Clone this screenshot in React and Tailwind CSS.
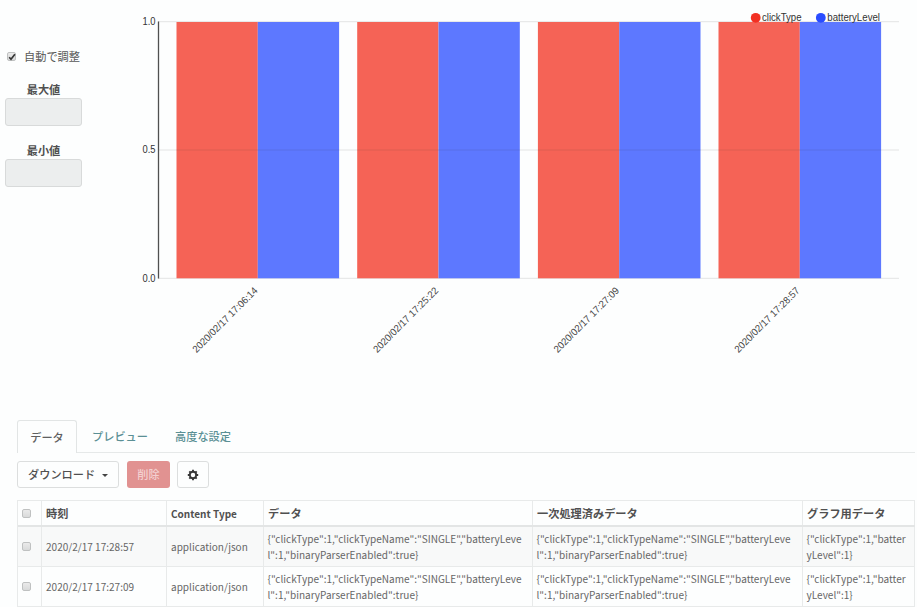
const cjk = "font-['Noto_Sans_CJK_JP',sans-serif]";

const groups = [
  { x: 176.5, label: "2020/02/17 17:06:14" },
  { x: 357.2, label: "2020/02/17 17:25:22" },
  { x: 537.9, label: "2020/02/17 17:27:09" },
  { x: 718.5, label: "2020/02/17 17:28:57" },
];

const ticks = [
  { y: 21.7, label: "1.0" },
  { y: 150, label: "0.5" },
  { y: 278.3, label: "0.0" },
];

const rows = [
  { time: "2020/2/17 17:28:57", shade: "bg-[#f8f9f9]" },
  { time: "2020/2/17 17:27:09", shade: "bg-[#fdfefe]" },
];

const payload = [
  '{"clickType":1,"clickTypeName":"SINGLE","batteryLeve',
  'l":1,"binaryParserEnabled":true}',
];
const graphData = ['{"clickType":1,"batter', 'yLevel":1}'];

function Checkbox({ checked = false }) {
  return (
    <span className="flex h-[9px] w-[9px] shrink-0 items-center justify-center rounded-[2px] border border-[#bfc1c1] bg-gradient-to-b from-[#eaeaea] to-[#d9dada]">
      {checked && (
        <svg viewBox="0 0 8 8" className="h-[8px] w-[8px] shrink-0">
          <path d="M1.2 4.2 L3 6.2 L6.9 1.3" fill="none" stroke="#333" strokeWidth="1.7" />
        </svg>
      )}
    </span>
  );
}

function Limit({ label }) {
  return (
    <div className="flex w-[77px] flex-col items-center">
      <span className="h-[17px] text-[11.2px] leading-[17px] font-bold text-[#505050]">{label}</span>
      <div className="h-7 w-full rounded-[3px] border border-[#d8dada] bg-[#eceeee]" />
    </div>
  );
}

function Chart() {
  return (
    <svg width="787" height="420" viewBox="130 0 787 420" fontFamily="'Liberation Sans', Arial, sans-serif" fontSize="10">
      {ticks.map((t) => (
        <g key={t.label}>
          <line x1="158" x2="899" y1={t.y} y2={t.y} stroke="#e3e4e4" strokeWidth="1" />
          <text x="142.5" y={t.y + 3.4} textLength="13" lengthAdjust="spacingAndGlyphs" fill="#333">{t.label}</text>
        </g>
      ))}
      <line x1="158.5" x2="158.5" y1="21.5" y2="278.5" stroke="#505050" strokeWidth="1.3" />
      {groups.map((g) => (
        <g key={g.label}>
          <rect x={g.x} y="22" width="81.3" height="256.3" fill="#f56356" />
          <rect x={g.x + 81.3} y="22" width="81.3" height="256.3" fill="#5d78ff" />
          <line x1={g.x} x2={g.x + 162.6} y1="150" y2="150" stroke="#333333" strokeOpacity="0.12" />
          <text
            transform={`translate(${g.x + 81.8} 291.3) rotate(-45)`}
            textAnchor="end"
            textLength="87.5"
            lengthAdjust="spacingAndGlyphs"
            fill="#444"
          >
            {g.label}
          </text>
        </g>
      ))}
      <circle cx="755.7" cy="17.8" r="4.9" fill="#f23023" />
      <text x="762" y="21.2" textLength="39.5" lengthAdjust="spacingAndGlyphs" fill="#333">clickType</text>
      <circle cx="820.8" cy="17.8" r="4.9" fill="#2a4cff" />
      <text x="827.3" y="21.2" textLength="52.7" lengthAdjust="spacingAndGlyphs" fill="#333">batteryLevel</text>
    </svg>
  );
}

function Lines({ lines }) {
  return (
    <div className="border-r border-[#e8eaea] pt-[4px] pl-[3.5px] leading-4 whitespace-nowrap">
      {lines.map((l) => (
        <div key={l}>{l}</div>
      ))}
    </div>
  );
}

const columns = "grid grid-cols-[24px_125px_97px_269px_270px_112px]";
const cell = "flex items-center border-r border-[#e8eaea] pl-1";

export default function App() {
  return (
    <div className={`h-[607px] w-[917px] overflow-hidden bg-[#fdfefe] text-[#666] ${cjk}`}>
      <div className="flex h-[420px]">
        <div className="flex w-[130px] shrink-0 flex-col pt-[48px] pl-[5px]">
          <div className="flex h-[17px] items-center gap-2 pl-[2px] text-[11.2px] text-[#585858]">
            <Checkbox checked />
            <span>自動で調整</span>
          </div>
          <div className="mt-4 flex flex-col gap-4">
            <Limit label="最大値" />
            <Limit label="最小値" />
          </div>
        </div>
        <Chart />
      </div>

      <div className="ml-[17px] w-[900px]">
        <div className="flex h-[33px] w-[898px] border-b border-[#e6e9e9] text-[11.2px] font-medium text-[#5b9095]">
          <div className="flex h-[33px] w-[60px] items-center justify-center rounded-t-[3px] border border-b-0 border-[#e2e5e5] bg-[#fdfefe] text-[#606060]">データ</div>
          <div className="flex w-[84px] items-center pl-[15px]">プレビュー</div>
          <div className="flex items-center pl-[14px]">高度な設定</div>
        </div>

        <div className="mt-2 flex h-[27px] text-[11.2px] font-medium">
          <div className="flex w-[102px] items-center gap-[7px] rounded-[3px] border border-[#dcdede] pl-[10px] text-[#505050]">
            <span>ダウンロード</span>
            <span className="mt-[2px] border-x-[3.5px] border-t-[3.5px] border-x-transparent border-t-[#444]" />
          </div>
          <div className="ml-2 flex w-[43px] items-center justify-center rounded-[3px] bg-[#e19291] text-[#f3d0d0]">削除</div>
          <div className="ml-[7px] flex w-[32px] items-center justify-center rounded-[3px] border border-[#dcdede]">
            <svg viewBox="0 0 12 12" className="mr-px h-[12px] w-[12px]">
              <circle cx="6" cy="6" r="3.2" fill="none" stroke="#383838" strokeWidth="1.9" />
              <path
                d="M6 .8v1.8M6 9.4v1.8M.8 6h1.8M9.4 6h1.8M2.3 2.3l1.2 1.2M8.5 8.5l1.2 1.2M9.7 2.3L8.5 3.5M3.5 8.5L2.3 9.7"
                stroke="#383838"
                strokeWidth="1.9"
              />
            </svg>
          </div>
        </div>

        <div className="mt-[12px] w-[898px] border-t border-l border-[#e8eaea]">
          <div className={`${columns} h-[26px] border-b-2 border-[#e3e5e5] text-[11.2px] font-bold text-[#505050]`}>
            <div className={cell}><Checkbox /></div>
            <div className={cell}>時刻</div>
            <div className={`${cell} text-[10px]`}>Content Type</div>
            <div className={cell}>データ</div>
            <div className={cell}>一次処理済みデータ</div>
            <div className={cell}>グラフ用データ</div>
          </div>
          {rows.map((r) => (
            <div key={r.time} className={`${columns} h-[40px] border-b border-[#e8eaea] text-[10.04px] ${r.shade}`}>
              <div className={cell}><Checkbox /></div>
              <div className={cell}>{r.time}</div>
              <div className={cell}>application/json</div>
              <Lines lines={payload} />
              <Lines lines={payload} />
              <Lines lines={graphData} />
            </div>
          ))}
        </div>
      </div>
    </div>
  );
}
